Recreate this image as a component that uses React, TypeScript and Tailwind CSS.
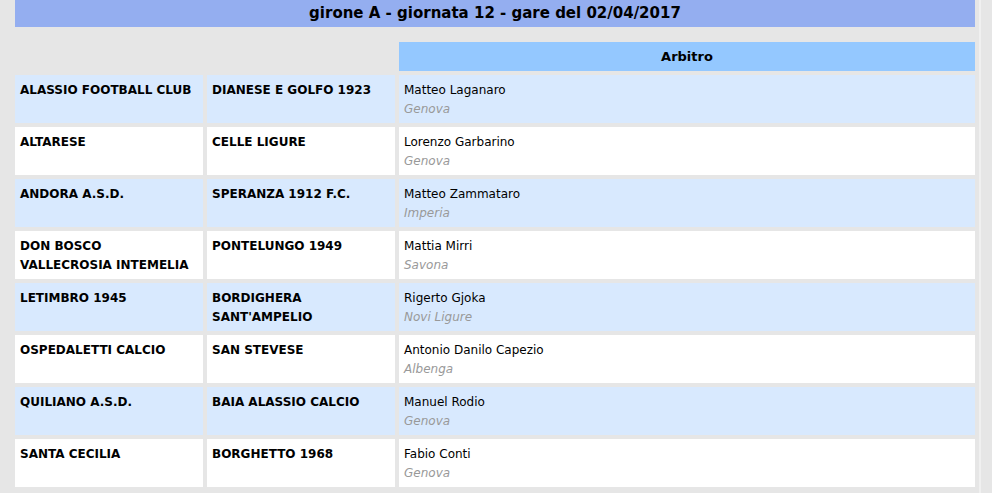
const matches = [
  { home: 'ALASSIO FOOTBALL CLUB', away: 'DIANESE E GOLFO 1923', ref: 'Matteo Laganaro', city: 'Genova' },
  { home: 'ALTARESE', away: 'CELLE LIGURE', ref: 'Lorenzo Garbarino', city: 'Genova' },
  { home: 'ANDORA A.S.D.', away: 'SPERANZA 1912 F.C.', ref: 'Matteo Zammataro', city: 'Imperia' },
  { home: 'DON BOSCO\nVALLECROSIA INTEMELIA', away: 'PONTELUNGO 1949', ref: 'Mattia Mirri', city: 'Savona' },
  { home: 'LETIMBRO 1945', away: 'BORDIGHERA\nSANT\'AMPELIO', ref: 'Rigerto Gjoka', city: 'Novi Ligure' },
  { home: 'OSPEDALETTI CALCIO', away: 'SAN STEVESE', ref: 'Antonio Danilo Capezio', city: 'Albenga' },
  { home: 'QUILIANO A.S.D.', away: 'BAIA ALASSIO CALCIO', ref: 'Manuel Rodio', city: 'Genova' },
  { home: 'SANTA CECILIA', away: 'BORGHETTO 1968', ref: 'Fabio Conti', city: 'Genova' },
]

export default function App() {
  return (
    <div className="flex min-h-[493px] bg-[#e6e6e6] font-['DejaVu_Sans',sans-serif] text-black">
      <div className="w-[975px] pl-[15px]">
        {/* title bar */}
        <div className="flex h-[27px] items-center justify-center bg-[#94aef0] text-[15px] font-bold">
          girone A - giornata 12 - gare del 02/04/2017
        </div>

        <div className="mt-[15px] grid grid-cols-[188px_188px_1fr] gap-[4px]">
          <div />
          <div />
          <div className="flex h-[29px] items-center justify-center bg-[#94c8ff] text-[13px] font-bold">
            Arbitro
          </div>

          {matches.map((m, i) => {
            const bg = i % 2 === 0 ? 'bg-[#d8e9fe]' : 'bg-white'
            return [
              <div key={i + 'h'} className={`${bg} h-[48px] whitespace-pre-line px-[5px] pt-[6px] text-[12px] font-bold leading-[19px]`}>
                {m.home}
              </div>,
              <div key={i + 'a'} className={`${bg} h-[48px] whitespace-pre-line px-[5px] pt-[6px] text-[12px] font-bold leading-[19px]`}>
                {m.away}
              </div>,
              <div key={i + 'r'} className={`${bg} h-[48px] px-[5px] pt-[6px] text-[12px] leading-[19px]`}>
                <div>{m.ref}</div>
                <div className="italic text-[#999999]">{m.city}</div>
              </div>,
            ]
          })}
        </div>
      </div>
      <div className="ml-[4px] w-[2px] bg-[#f0f0f0]" />
    </div>
  )
}
